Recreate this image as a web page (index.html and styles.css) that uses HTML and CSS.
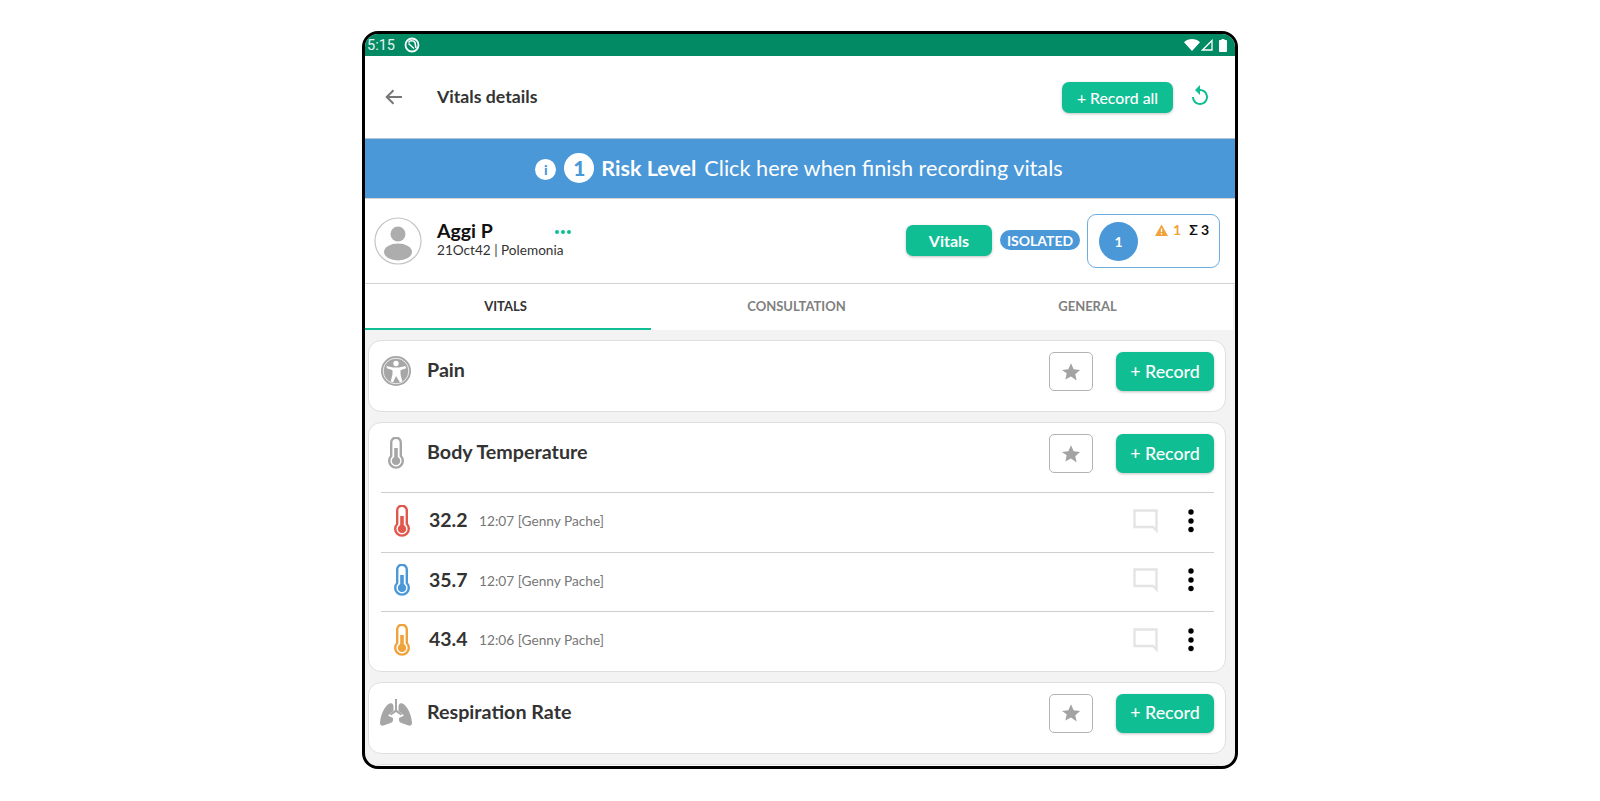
FILE: index.html
```html
<!DOCTYPE html>
<html lang="en">
<head>
    <meta charset="UTF-8">
    <title>Vitals details</title>
    <link rel="stylesheet" href="styles.css">
</head>
<body>
    <svg class="defs" width="0" height="0">
        <symbol id="thermo" viewBox="0 0 16 32">
            <path d="M3.200 19V5.500a4.800 4.800 0 0 1 9.600 0V19a6.800 6.800 0 1 1-9.600 0z" fill="none" stroke="currentColor" stroke-width="2.400"/>
            <path d="M6.200 11h3.600v9.100a4.200 4.200 0 1 1-3.600 0z" fill="currentColor"/>
        </symbol>
        <symbol id="star" viewBox="0 0 24 24">
            <path d="M12 2.500l2.900 6.400 7 .8-5.200 4.700 1.450 6.900L12 16.800l-6.150 3.500 1.450-6.900L2.100 9.700l7-.8z" fill="currentColor"/>
        </symbol>
        <symbol id="comment" viewBox="0 0 25 24">
            <path d="M1.500 1.500h22v20l-3.500-3.500H1.500z" fill="none" stroke="currentColor" stroke-width="2.400"/>
        </symbol>
        <symbol id="dots" viewBox="0 0 6 24">
            <circle cx="3" cy="3" r="2.700"/><circle cx="3" cy="12" r="2.700"/><circle cx="3" cy="20.500" r="2.700"/>
        </symbol>
    </svg>

    <div class="device">
        <div class="statusbar">
            <span class="clock">5:15</span>
            <svg class="sb-app" width="16" height="16" viewBox="0 0 16 16"><circle cx="8" cy="8" r="6.500" fill="none" stroke="#fff" stroke-width="1.800"/><path d="M4.500 5.500a4 4 0 0 1 6.500 0L12 11M4.500 6.500l5.500 5" fill="none" stroke="#fff" stroke-width="1.500"/></svg>
            <span class="sb-right">
                <svg class="sb-wifi" width="16" height="12" viewBox="0 0 16 12"><path d="M0 3.200C4.500-1 11.500-1 16 3.200L8 12z" fill="#fff"/></svg>
                <svg class="sb-signal" width="12" height="12" viewBox="0 0 12 12"><path d="M11 1.500V11H1.500z" fill="none" stroke="#fff" stroke-width="1.300"/></svg>
                <svg width="8" height="13" viewBox="0 0 8 13"><path d="M2.500 0h3v1H7a1 1 0 0 1 1 1v10a1 1 0 0 1-1 1H1a1 1 0 0 1-1-1V2a1 1 0 0 1 1-1h1.500z" fill="#fff"/></svg>
            </span>
        </div>

        <header class="topbar">
            <svg class="back" width="18" height="16" viewBox="0 0 18 16"><path d="M17 8H2M8.500 1.200L1.700 8l6.800 6.800" fill="none" stroke="#777" stroke-width="2"/></svg>
            <h1>Vitals details</h1>
            <button class="btn btn-all">+ Record all</button>
            <svg class="refresh" width="16" height="20" viewBox="4 1 16 20"><path d="M12 5V1L7 6l5 5V7c3.310 0 6 2.690 6 6s-2.690 6-6 6-6-2.690-6-6H4c0 4.420 3.580 8 8 8s8-3.580 8-8-3.580-8-8-8z" fill="#10be94"/></svg>
        </header>

        <div class="banner">
            <span class="info">i</span>
            <span class="risk-num">1</span>
            <b>Risk Level</b>
            <span>Click here when finish recording vitals</span>
        </div>

        <section class="patient">
            <svg class="avatar" width="48" height="48" viewBox="0 0 48 48">
                <circle cx="24" cy="24" r="23" fill="#fff" stroke="#c4c4c4" stroke-width="1.200"/>
                <circle cx="24" cy="17" r="7.500" fill="#adadad"/>
                <ellipse cx="24" cy="35" rx="14" ry="8.500" fill="#adadad"/>
            </svg>
            <div class="who">
                <div class="name-line">
                    <span class="name">Aggi P</span>
                    <span class="more"><i></i><i></i><i></i></span>
                </div>
                <div class="sub">21Oct42 | Polemonia</div>
            </div>
            <button class="btn btn-vitals">Vitals</button>
            <span class="pill">ISOLATED</span>
            <div class="score">
                <span class="score-num">1</span>
                <div class="score-info">
                    <svg width="13" height="12" viewBox="0 0 13 12"><path d="M6.500 0.500L13 12H0z" fill="#f0a33a"/><path d="M6.500 4.500v3.500M6.500 9v1.500" stroke="#fff" stroke-width="1.300"/></svg>
                    <span class="warn">1</span>
                    <span class="sum">Σ 3</span>
                </div>
            </div>
        </section>

        <nav class="tabs">
            <a class="tab active">VITALS</a>
            <a class="tab">CONSULTATION</a>
            <a class="tab">GENERAL</a>
        </nav>

        <main class="content">
            <section class="card">
                <div class="card-head">
                    <svg class="card-icon" width="32" height="32" viewBox="0 0 32 32">
                        <circle cx="16" cy="16" r="15" fill="#a6a6a6"/>
                        <circle cx="16" cy="16" r="12.800" fill="none" stroke="#fff" stroke-width=".8"/>
                        <circle cx="16" cy="8.500" r="2.700" fill="#fff"/>
                        <path d="M6.500 11l6.500 1.500h6l6.500-1.500.6 2.200-5.600 2v4l1.800 7.300-2.400.8L16 21l-2.900 6.300-2.400-.8 1.800-7.300v-4l-5.600-2z" fill="#fff"/>
                    </svg>
                    <h2>Pain</h2>
                    <button class="fav"><svg width="22" height="22"><use href="#star"/></svg></button>
                    <button class="btn btn-record">+ Record</button>
                </div>
            </section>

            <section class="card">
                <div class="card-head">
                    <span class="thermo-box"><svg class="thermo-grey" width="16" height="32"><use href="#thermo"/></svg></span>
                    <h2>Body Temperature</h2>
                    <button class="fav"><svg width="22" height="22"><use href="#star"/></svg></button>
                    <button class="btn btn-record">+ Record</button>
                </div>
                <div class="reading">
                    <svg class="thermo red" width="16" height="32"><use href="#thermo"/></svg>
                    <span class="value">32.2</span>
                    <span class="when">12:07 [Genny Pache]</span>
                    <svg class="note" width="25" height="24"><use href="#comment"/></svg>
                    <svg class="menu" width="6" height="24"><use href="#dots"/></svg>
                </div>
                <div class="reading">
                    <svg class="thermo blue" width="16" height="32"><use href="#thermo"/></svg>
                    <span class="value">35.7</span>
                    <span class="when">12:07 [Genny Pache]</span>
                    <svg class="note" width="25" height="24"><use href="#comment"/></svg>
                    <svg class="menu" width="6" height="24"><use href="#dots"/></svg>
                </div>
                <div class="reading">
                    <svg class="thermo orange" width="16" height="32"><use href="#thermo"/></svg>
                    <span class="value">43.4</span>
                    <span class="when">12:06 [Genny Pache]</span>
                    <svg class="note" width="25" height="24"><use href="#comment"/></svg>
                    <svg class="menu" width="6" height="24"><use href="#dots"/></svg>
                </div>
            </section>

            <section class="card">
                <div class="card-head">
                    <svg class="card-icon" width="32" height="32" viewBox="0 0 32 32">
                        <path d="M15 2h2v11l5 4-1 1.500-5-3.500-5 3.500-1-1.500 5-4z" fill="#a6a6a6"/>
                        <path d="M9.500 6.500c2.500-1 4 .5 4 3v4.500L8 18.500l5 2.500v2c0 1.500-1 2.500-2.500 3L3.500 28.500C1.500 29 0 28 0 26 .5 17 5 8.500 9.500 6.500zM22.500 6.500c-2.500-1-4 .5-4 3v4.500l5.500 4.500-5 2.500v2c0 1.500 1 2.500 2.500 3l7 2.500c2 .5 3.500-.5 3.500-2.500-.5-9-5-17.500-9.500-19.500z" fill="#a6a6a6"/>
                    </svg>
                    <h2>Respiration Rate</h2>
                    <button class="fav"><svg width="22" height="22"><use href="#star"/></svg></button>
                    <button class="btn btn-record">+ Record</button>
                </div>
            </section>

            <section class="card"></section>
        </main>
    </div>
</body>
</html>
```

FILE: styles.css
```css
body {
    margin: 0;
    padding: 31px 0 0 362px;
    background: #fff;
    font-family: Lato, "Open Sans", sans-serif;
    color: #333;
}
.defs {
    position: absolute;
}
h1, h2 {
    margin: 0;
}
button {
    font-family: inherit;
    border: none;
    cursor: pointer;
}
.device {
    box-sizing: border-box;
    width: 876px;
    height: 738px;
    border: 3px solid #000;
    border-radius: 16px;
    overflow: hidden;
    display: flex;
    flex-direction: column;
    background: #f3f3f3;
}

/* status bar */
.statusbar {
    flex: none;
    height: 22px;
    background: #028a65;
    display: flex;
    align-items: center;
    color: #e8f4f0;
    padding: 0 8px 0 2px;
    font-family: Roboto, sans-serif;
    font-size: 14.500px;
}
.sb-app {
    margin-left: 9px;
}
.sb-right {
    margin-left: auto;
    display: flex;
    align-items: center;
}
.sb-wifi {
    margin-right: 1px;
}
.sb-signal {
    margin-right: 6px;
}

/* top bar */
.topbar {
    flex: none;
    height: 82px;
    box-sizing: border-box;
    background: #fff;
    display: flex;
    align-items: center;
    padding: 0 27px 0 20px;
}
.topbar h1 {
    font-size: 17.700px;
    font-weight: 700;
    margin: 0 0 1px 34px;
}
.btn {
    background: #10be94;
    color: #fff;
    border-radius: 7px;
    box-shadow: 0 1px 3px rgba(0, 0, 0, .25);
}
.btn-all {
    width: 111px;
    height: 31px;
    margin-left: auto;
    font-size: 15.800px;
    font-weight: 500;
    padding: 0;
}
.refresh {
    margin-left: 19px;
    margin-bottom: 4px;
}

/* risk banner */
.banner {
    flex: none;
    height: 61px;
    box-sizing: border-box;
    background: #4a98d8;
    border-top: 1px solid #b5c5d3;
    border-bottom: 1px solid #d5d5d5;
    color: #fff;
    display: flex;
    align-items: center;
    justify-content: center;
    font-size: 21.700px;
    padding: 0 2px 2px 0;
}
.banner b {
    margin: 0 8px 0 7px;
    font-size: 21.500px;
}
.info {
    width: 21px;
    height: 21px;
    border-radius: 50%;
    background: #fff;
    color: #4a98d8;
    font-size: 14px;
    font-weight: 900;
    line-height: 21px;
    text-align: center;
    margin: 4px 8px 0 0;
}
.risk-num {
    width: 30px;
    height: 30px;
    border-radius: 50%;
    background: #fff;
    color: #4a98d8;
    font-size: 21px;
    font-weight: 900;
    line-height: 30px;
    text-align: center;
}

/* patient row */
.patient {
    flex: none;
    height: 85px;
    box-sizing: border-box;
    background: #fff;
    border-bottom: 1px solid #d2d2d2;
    display: flex;
    align-items: center;
    padding: 0 15px 0 9px;
}
.who {
    margin-left: 15px;
    margin-bottom: 4px;
}
.name-line {
    display: flex;
    align-items: center;
}
.name {
    width: 118px;
    font-size: 19.500px;
    font-weight: 700;
    color: #111;
    line-height: 22px;
}
.more {
    display: flex;
    gap: 2px;
    margin-top: 2px;
}
.more i {
    width: 4px;
    height: 4px;
    border-radius: 50%;
    background: #10be94;
}
.sub {
    font-size: 13.600px;
    line-height: 17px;
}
.btn-vitals {
    width: 86px;
    height: 31px;
    margin: 0 0 2px auto;
    font-size: 16px;
    font-weight: 700;
}
.pill {
    margin: 0 0 2px 8px;
    width: 80px;
    height: 20px;
    border-radius: 10px;
    background: #4a98d8;
    color: #fff;
    font-size: 14px;
    font-weight: 700;
    line-height: 21px;
    text-align: center;
}
.score {
    box-sizing: border-box;
    width: 133px;
    height: 54px;
    margin-left: 7px;
    border: 1px solid #6cade2;
    border-radius: 9px;
    display: flex;
    align-items: center;
    padding-left: 11px;
}
.score-num {
    width: 39px;
    height: 39px;
    border-radius: 50%;
    background: #4a98d8;
    color: #fff;
    font-size: 14px;
    font-weight: 700;
    line-height: 39px;
    text-align: center;
}
.score-info {
    align-self: flex-start;
    display: flex;
    align-items: center;
    margin: 6px 0 0 17px;
    font-size: 14px;
    font-weight: 700;
}
.warn {
    color: #f0a33a;
    margin: 0 8px 0 5px;
}
.sum {
    color: #111;
}

/* tabs */
.tabs {
    flex: none;
    height: 46px;
    box-sizing: border-box;
    margin-left: -5px;
    width: 873px;
    background: #fff;
    display: grid;
    grid-template-columns: repeat(3, 1fr);
}
.tab {
    font-size: 13px;
    font-weight: 700;
    color: #808080;
    text-align: center;
    line-height: 44px;
    height: 46px;
    box-sizing: border-box;
}
.tab.active {
    color: #333;
    border-bottom: 2px solid #10be94;
}

/* vitals list */
.content {
    flex: 1;
    min-height: 0;
    padding: 10px 9px 0 3px;
    display: flex;
    flex-direction: column;
    gap: 10px;
}
.card {
    flex: none;
    box-sizing: border-box;
    min-height: 72px;
    background: #fff;
    border: 1px solid #dfdfdf;
    border-radius: 13px;
    padding: 0 11px 0 12px;
}
.card-head {
    height: 69px;
    display: flex;
    align-items: flex-start;
    padding-top: 11px;
    box-sizing: border-box;
}
.card-icon {
    margin: 3px 0 0 -1px;
}
.thermo-box {
    width: 16px;
    margin: 3px 8px 0 7px;
}
.thermo-grey {
    color: #a6a6a6;
    display: block;
}
.card-head h2 {
    font-size: 19.700px;
    font-weight: 700;
    line-height: 24px;
    margin: 6px 0 0 15px;
    flex: 1;
}
.fav {
    box-sizing: border-box;
    width: 44px;
    height: 39px;
    background: #fff;
    border: 1.500px solid #b3b3b3;
    border-radius: 5px;
    color: #a3a3a3;
    padding: 0;
    display: flex;
    align-items: center;
    justify-content: center;
    margin-right: 23px;
}
.btn-record {
    width: 98px;
    height: 39px;
    font-size: 17.800px;
    font-weight: 500;
    padding: 0 0 2px;
}
.reading {
    height: 59.500px;
    box-sizing: border-box;
    border-top: 1px solid #cfcfcf;
    display: flex;
    align-items: center;
    padding-bottom: 3px;
}
.thermo {
    margin-left: 13px;
}
.thermo.red { color: #e2574c; }
.thermo.blue { color: #4a98d8; }
.thermo.orange { color: #f0a33a; }
.value {
    font-size: 19.500px;
    font-weight: 700;
    margin: 0 0 2px 19px;
    width: 50px;
}
.when {
    font-size: 13.700px;
    color: #777;
}
.note {
    margin-left: auto;
    color: #e4e4e4;
}
.menu {
    margin: 0 20px 0 30px;
}
```
